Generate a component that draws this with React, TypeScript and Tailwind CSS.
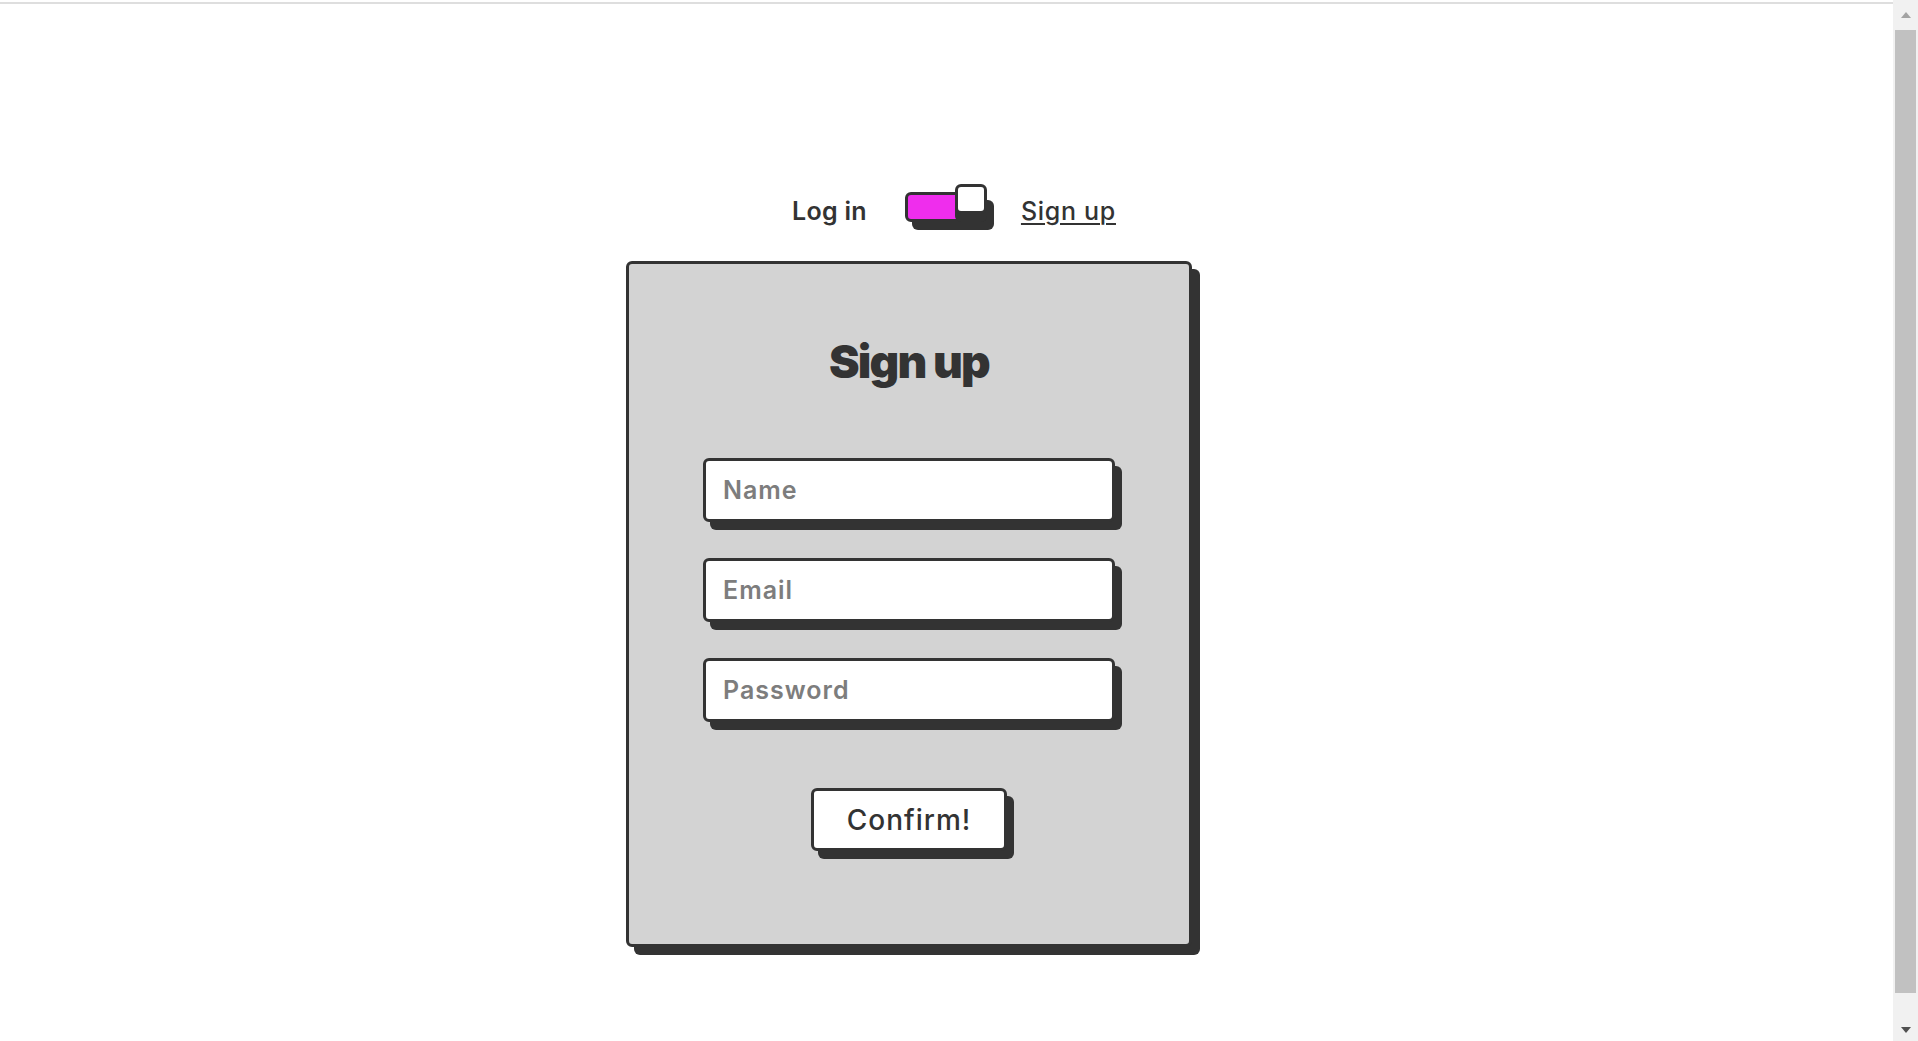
import React from "react";

const font = { fontFamily: "Inter, 'Noto Sans', sans-serif" };

function Toggle() {
  return (
    <div className="relative w-[89px] h-[46px] shrink-0">
      {/* track */}
      <div className="absolute left-0 top-[8px] w-[82px] h-[30px] rounded-[6px] border-[3px] border-[#333333] bg-[#ef2ded] shadow-[7px_8px_0_#333333]" />
      {/* knob */}
      <div className="absolute left-[50px] top-0 w-[32px] h-[30px] rounded-[6px] border-[3px] border-[#333333] bg-white shadow-[0_8px_0_#333333]" />
    </div>
  );
}

function Field({ placeholder, type = "text" }: { placeholder: string; type?: string }) {
  return (
    <input
      type={type}
      placeholder={placeholder}
      style={font}
      className="block w-[412px] h-[64px] rounded-[6px] border-[3px] border-[#333333] bg-white shadow-[7px_8px_0_#333333] px-[17px] text-[25px] font-semibold tracking-[1px] text-[#333333] placeholder:text-[#7d7d7d] outline-none"
    />
  );
}

function Scrollbar() {
  return (
    <div className="w-[25px] shrink-0 bg-[#f1f1f1] flex flex-col">
      <div className="h-[30px] flex items-center justify-center">
        <svg width="10" height="6" viewBox="0 0 10 6">
          <polygon points="5,0 10,6 0,6" fill="#a3a3a3" />
        </svg>
      </div>
      <div className="mx-[2px] h-[963px] bg-[#c1c1c1]" />
      <div className="flex-1" />
      <div className="h-[22px] flex items-center justify-center">
        <svg width="10" height="6" viewBox="0 0 10 6">
          <polygon points="0,0 10,0 5,6" fill="#505050" />
        </svg>
      </div>
    </div>
  );
}

export default function App() {
  return (
    <div style={font} className="h-[1041px] overflow-hidden flex bg-white">
      <main className="flex-1 flex flex-col">
        <div className="mt-[2px] h-[2px] bg-[#dedede]" />

        {/* mode switch */}
        <div className="mt-[180px] flex justify-center ml-[15px] text-[#333333]">
          <span className="mt-[15px] text-[25px] leading-none font-semibold tracking-[0.3px]">Log in</span>
          <div className="ml-[38px]">
            <Toggle />
          </div>
          <span className="ml-[27px] mt-[15px] text-[25px] leading-none font-medium tracking-[0.7px] underline decoration-2 underline-offset-[3px]">
            Sign up
          </span>
        </div>

        {/* form card */}
        <div className="self-center mr-[75px] mt-[31px] w-[566px] h-[686px] rounded-[6px] border-[3px] border-[#333333] bg-[#d3d3d3] shadow-[8px_8px_0_#333333] flex flex-col items-center">
          <h1 className="mt-[74px] text-[46px] leading-none font-black tracking-[-1.8px] text-[#333333]">Sign up</h1>
          <div className="mt-[74px] flex flex-col gap-[36px]">
            <Field placeholder="Name" />
            <Field placeholder="Email" type="email" />
            <Field placeholder="Password" type="password" />
          </div>
          <button
            style={font}
            className="mt-[66px] w-[196px] h-[63px] rounded-[6px] border-[3px] border-[#333333] bg-white shadow-[7px_8px_0_#333333] text-[28px] font-medium tracking-[1px] text-[#333333]"
          >
            Confirm!
          </button>
        </div>
      </main>
      <Scrollbar />
    </div>
  );
}
